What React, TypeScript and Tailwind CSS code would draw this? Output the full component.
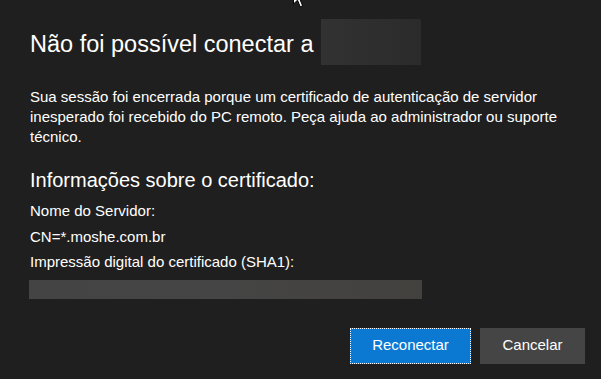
import type { FC } from "react";

const Cursor: FC = () => (
  <svg className="absolute left-[293px] top-[-13px]" width="14" height="21" viewBox="0 0 14 21">
    <path d="M0.5 0.5 L0.5 17 L4.5 13.2 L7.2 19.8 L9.6 18.8 L7 12.4 L12.3 12.4 Z" fill="#fff" stroke="#000" strokeWidth="1" />
  </svg>
);

const App: FC = () => {
  return (
    <div
      className="relative w-[601px] h-[379px] overflow-hidden bg-[#1f1f1f] text-white"
      style={{ fontFamily: '"Segoe UI", "Liberation Sans", Arial, sans-serif' }}
    >
      <Cursor />
      <div className="pl-[30px] pt-[19px]">
        <div className="flex items-start">
          <h1 className="mt-[11px] text-[23.5px] leading-[28px] font-normal">Não foi possível conectar a</h1>
          <div className="ml-[8px] w-[100px] h-[46px] bg-gradient-to-r from-[#323232] to-[#2b2b2b]" />
        </div>
        <p className="mt-[22px] w-[540px] text-[15px] leading-[20px]">
          Sua sessão foi encerrada porque um certificado de autenticação de servidor inesperado foi recebido do PC
          remoto. Peça ajuda ao administrador ou suporte técnico.
        </p>
        <h2 className="mt-[21px] text-[20px] leading-[24px] font-normal">Informações sobre o certificado:</h2>
        <div className="mt-[6px] text-[15px] leading-[25.5px]">
          <div>Nome do Servidor:</div>
          <div>CN=*.moshe.com.br</div>
          <div>Impressão digital do certificado (SHA1):</div>
        </div>
        <div className="mt-[5px] -ml-px w-[393px] h-[19px] bg-gradient-to-r from-[#444444] via-[#454545] to-[#43413e]" />
      </div>
      <div className="mt-[29px] flex justify-end gap-[9px] pr-[16px]">
        <button className="w-[121px] h-[36px] bg-[#0b79d1] text-[15px] outline-1 outline-dotted outline-white -outline-offset-1">
          Reconectar
        </button>
        <button className="w-[105px] h-[36px] bg-[#454545] text-[15px]">Cancelar</button>
      </div>
    </div>
  );
};

export default App;
